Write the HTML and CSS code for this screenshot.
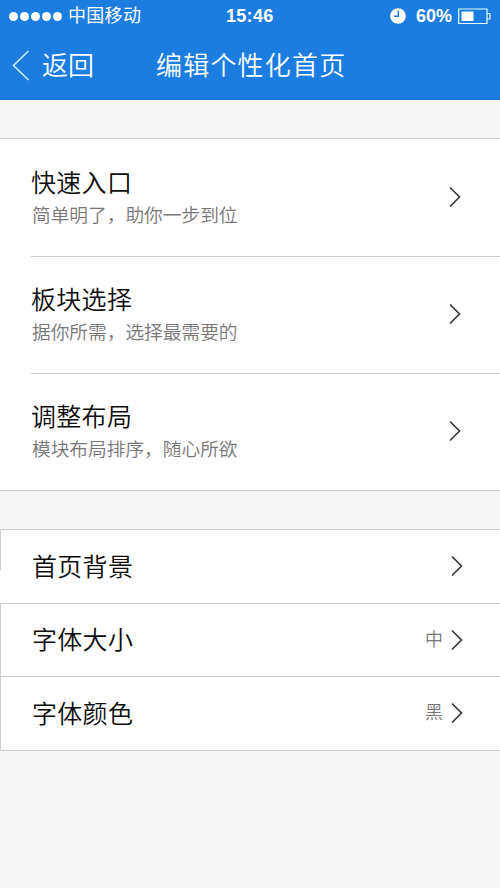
FILE: index.html
```
<!DOCTYPE html>
<html lang="zh-CN">
<head>
<meta charset="utf-8">
<title>编辑个性化首页</title>
<link rel="stylesheet" href="styles.css">
</head>
<body>
<header class="top">
  <div class="status">
    <div class="signal"><i></i><i></i><i></i><i></i><i></i></div>
    <span class="carrier">中国移动</span>
    <span class="time">15:46</span>
    <svg class="clock" width="16" height="16" viewBox="0 0 16 16"><circle cx="8" cy="8" r="7.8" fill="#fff"/><path d="M8.3 2.8V8.2H4" fill="none" stroke="#1c7de0" stroke-width="1.4"/></svg>
    <span class="percent">60%</span>
    <svg class="battery" width="33" height="17" viewBox="0 0 33 17"><path d="M.7 1H29V15.5H.7ZM29 5.5H32V11H29" fill="none" stroke="#e6fbff" stroke-width="1.2"/><path d="M3.5 3.5H15.5V13H3.5Z" fill="#fff"/></svg>
  </div>
  <nav class="nav">
    <a class="back">
      <svg width="18" height="32" viewBox="0 0 18 32"><path d="M16.5 1L1.5 15.5L16.5 30" fill="none" stroke="#d5f3ff" stroke-width="1.5"/></svg>
      <span>返回</span>
    </a>
    <h1>编辑个性化首页</h1>
  </nav>
</header>
<main>
  <section class="group entries">
    <div class="row">
      <div class="text"><h2>快速入口</h2><p>简单明了，助你一步到位</p></div>
      <svg class="chevron" width="12" height="22" viewBox="0 0 12 22"><path d="M1 1.5L10.5 11L1 20.5"/></svg>
    </div>
    <div class="row">
      <div class="text"><h2>板块选择</h2><p>据你所需，选择最需要的</p></div>
      <svg class="chevron" width="12" height="22" viewBox="0 0 12 22"><path d="M1 1.5L10.5 11L1 20.5"/></svg>
    </div>
    <div class="row">
      <div class="text"><h2>调整布局</h2><p>模块布局排序，随心所欲</p></div>
      <svg class="chevron" width="12" height="22" viewBox="0 0 12 22"><path d="M1 1.5L10.5 11L1 20.5"/></svg>
    </div>
  </section>
  <section class="group options">
    <div class="row short-edge">
      <h2>首页背景</h2>
      <svg class="chevron" width="12" height="22" viewBox="0 0 12 22"><path d="M1 1.5L10.5 11L1 20.5"/></svg>
    </div>
    <div class="row">
      <h2>字体大小</h2><span class="value">中</span>
      <svg class="chevron" width="12" height="22" viewBox="0 0 12 22"><path d="M1 1.5L10.5 11L1 20.5"/></svg>
    </div>
    <div class="row">
      <h2>字体颜色</h2><span class="value">黑</span>
      <svg class="chevron" width="12" height="22" viewBox="0 0 12 22"><path d="M1 1.5L10.5 11L1 20.5"/></svg>
    </div>
  </section>
</main>
</body>
</html>
```
FILE: styles.css
```
* { box-sizing: border-box; }
body {
  margin: 0;
  min-height: 888px;
  background: #f6f6f6;
  color: #0c0c0c;
  font-family: "Liberation Sans", "Noto Sans CJK SC", sans-serif;
  font-weight: 350;
}
h1, h2, p { margin: 0; font-weight: 350; }
svg { display: block; flex: none; }
.top {
  height: 100px;
  background: #1c7de0;
  border-bottom: 1px solid #1873d3;
  color: #fff;
}
.status {
  height: 32px;
  display: grid;
  grid-template-columns: 59px 158px 164px 26px 42px 33px;
  align-items: center;
  padding-left: 9px;
}
.signal { display: flex; gap: 2px; }
.signal i { width: 9px; height: 9px; border-radius: 50%; background: #fff; }
.carrier { font-size: 18px; line-height: 32px; white-space: nowrap; letter-spacing: .3px; font-weight: 400; }
.time { font-size: 18px; font-weight: 700; letter-spacing: .3px; }
.percent { font-size: 18px; font-weight: 700; }
.nav {
  height: 67px;
  display: grid;
  grid-template-columns: 144px 1fr;
  align-items: center;
  padding-left: 12px;
}
.back { display: flex; align-items: center; gap: 12px; font-size: 26px; line-height: 36px; }
.nav h1 { font-size: 26px; line-height: 36px; letter-spacing: 1.2px; padding-top: 1px; }
.group { background: #fff; margin-top: 38px; border-top: 1px solid #cecece; }
.entries { border-bottom: 1px solid #cecece; }
.row { display: flex; align-items: center; }
.entries .row {
  height: 117px;
  margin-left: 31px;
  padding-right: 39px;
  justify-content: space-between;
}
.entries .row + .row { border-top: 1px solid #cecece; }
.entries .text { padding-top: 2px; }
.entries .chevron { margin-bottom: 2px; }
h2 { font-size: 25px; line-height: 34px; letter-spacing: .3px; }
.entries p { margin-left: 1px; font-size: 18.7px; line-height: 32px; color: #777; }
.chevron { fill: none; stroke: #3b3b3d; stroke-width: 1.7; }
.options .row {
  height: 73.5px;
  padding: 0 37px 0 31px;
  border-left: 1px solid #cecece;
  border-bottom: 1px solid #cecece;
}
.options .short-edge {
  border-left: 0;
  padding-left: 32px;
  background: linear-gradient(#cecece, #cecece) 0 0 / 1px 40px no-repeat;
}
.options h2 { flex: 1; padding-top: 1px; }
.value { margin-right: 8px; font-size: 18px; line-height: 28px; color: #777; }
```
